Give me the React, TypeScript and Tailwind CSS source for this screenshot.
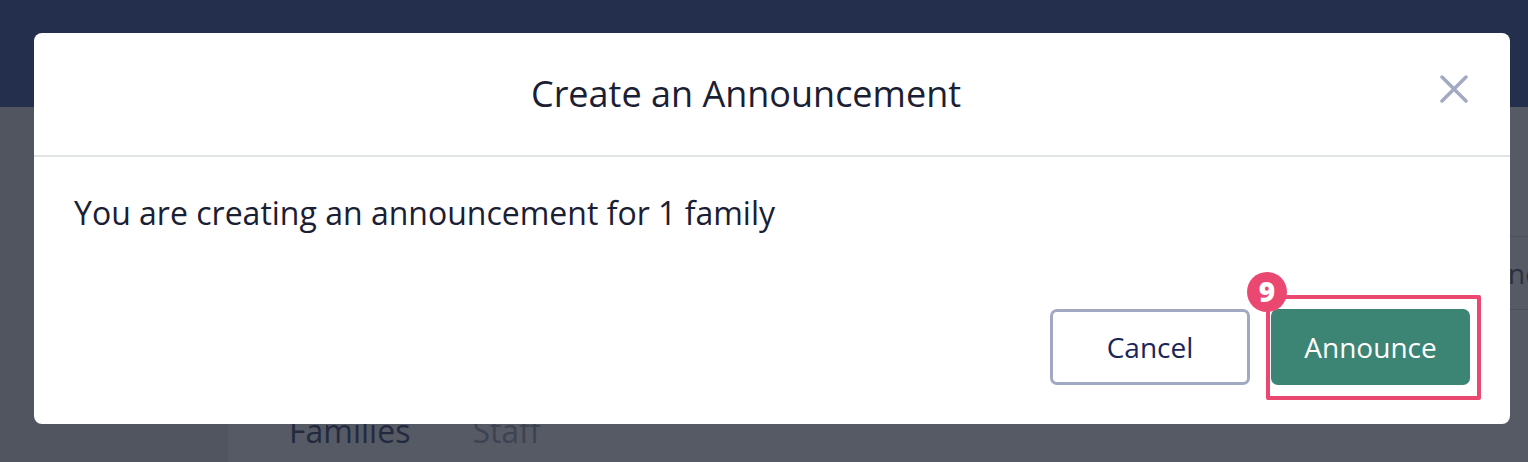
export default function App() {
  return (
    <div className="relative h-[462px] w-[1528px] overflow-hidden bg-[#555a64] font-['Open_Sans',sans-serif]">
      {/* page behind the overlay */}
      <div className="h-[107px] bg-[#242e4d]" />
      <div className="flex h-[355px]">
        <div className="w-[228px] bg-[#50555f]" />
        <div className="flex flex-1 flex-col">
          <div className="mt-[129px] flex justify-end">
            <div className="flex h-[74px] w-[120px] items-center overflow-hidden whitespace-nowrap border-y border-[#4a4f59] pl-[14px] text-[28px] text-[#2b3040]">
              Announce
            </div>
          </div>
          <div className="mt-[105px] flex gap-[62px] pl-[61px] text-[32px] leading-none">
            <span className="text-[#232a40]">Families</span>
            <span className="text-[#3d4352]">Staff</span>
          </div>
        </div>
      </div>

      {/* modal */}
      <div className="absolute left-[34px] top-[33px] flex h-[391px] w-[1476px] flex-col rounded-[8px] bg-white">
        <div className="relative flex h-[124px] items-center justify-center border-b-[2px] border-[#e1e5e5] pr-[52px]">
          <h2 className="text-[36px] font-normal text-[#1a2033]">Create an Announcement</h2>
          <button className="absolute right-[42px] top-[42px] h-[28px] w-[28px]">
            <svg viewBox="0 0 28 28" className="h-[28px] w-[28px]" stroke="#a3a9c2" strokeWidth="3.5" strokeLinecap="round">
              <path d="M2 2L26 26M26 2L2 26" />
            </svg>
          </button>
        </div>
        <div className="px-[40px] pt-[32px] text-[32px] text-[#1a2033]">
          You are creating an announcement for 1 family
        </div>
        <div className="mt-auto flex justify-end gap-[21px] px-[40px] pb-[39px]">
          <button className="h-[76px] w-[200px] rounded-[7px] border-[3px] border-[#a1a8c1] text-[28px] text-[#1b2459]">
            Cancel
          </button>
          <button className="h-[76px] w-[199px] rounded-[7px] bg-[#3c8473] text-[28px] text-white">
            Announce
          </button>
        </div>
      </div>

      {/* highlight callout */}
      <div className="absolute left-[1266px] top-[295px] h-[105px] w-[215px] rounded-[2px] border-[4px] border-[#eb4871]" />
      <div className="absolute left-[1247px] top-[272px] flex h-[40px] w-[40px] items-center justify-center rounded-full bg-[#eb4871] pb-[2px] text-[28px] font-extrabold leading-none text-white">
        9
      </div>
    </div>
  );
}
